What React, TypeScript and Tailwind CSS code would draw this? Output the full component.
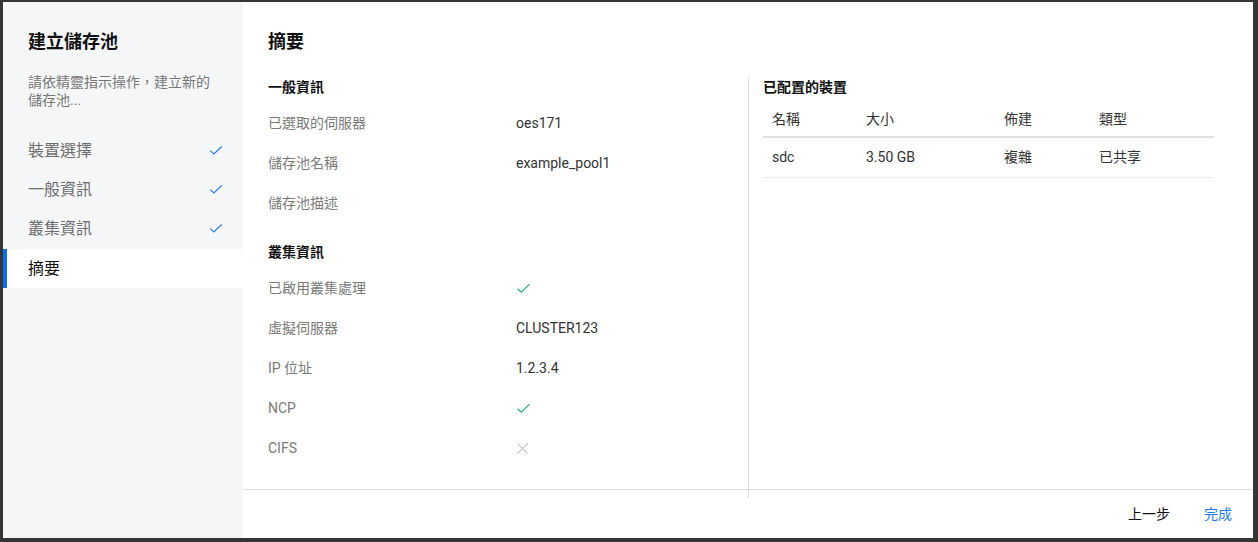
import React from "react";

/* ─────────────────────────────
   DATA
───────────────────────────── */

const steps = [
  { name: "裝置選擇", done: true },
  { name: "一般資訊", done: true },
  { name: "叢集資訊", done: true },
  { name: "摘要", done: false, active: true },
];

type Value = string | "yes" | "no";

const generalInfo: { label: string; value: Value }[] = [
  { label: "已選取的伺服器", value: "oes171" },
  { label: "儲存池名稱", value: "example_pool1" },
  { label: "儲存池描述", value: "" },
];

const clusterInfo: { label: string; value: Value }[] = [
  { label: "已啟用叢集處理", value: "yes" },
  { label: "虛擬伺服器", value: "CLUSTER123" },
  { label: "IP 位址", value: "1.2.3.4" },
  { label: "NCP", value: "yes" },
  { label: "CIFS", value: "no" },
];

const devices = [{ name: "sdc", size: "3.50 GB", provision: "複雜", type: "已共享" }];

/* ─────────────────────────────
   ICONS
───────────────────────────── */

function Check({ className }: { className?: string }) {
  return (
    <svg viewBox="0 0 16 12" className={className} fill="none" stroke="currentColor" strokeWidth="1.4">
      <path d="M1.5 6.2 L5.6 10 L14.5 1.5" />
    </svg>
  );
}

function Cross({ className }: { className?: string }) {
  return (
    <svg viewBox="0 0 14 14" className={className} fill="none" stroke="currentColor" strokeWidth="1.3">
      <path d="M1.5 1.5 L12.5 12.5 M12.5 1.5 L1.5 12.5" />
    </svg>
  );
}

/* ─────────────────────────────
   UI
───────────────────────────── */

function InfoRow({ label, value }: { label: string; value: Value }) {
  return (
    <div className="flex h-[40px] items-center text-[14px]">
      <div className="w-[248px] text-[#7a7a7a]">{label}</div>
      <div className="text-[#333]">
        {value === "yes" ? (
          <Check className="h-[11px] w-[15px] text-[#2fae6e]" />
        ) : value === "no" ? (
          <Cross className="h-[13px] w-[13px] text-[#c4c4c4]" />
        ) : (
          value
        )}
      </div>
    </div>
  );
}

export default function App() {
  return (
    <div
      className="h-[542px] w-full bg-[#353535] pb-[4px] pl-[3px] pr-[5px] pt-[2px]"
      style={{ fontFamily: "Roboto, 'Noto Sans CJK TC', 'Noto Sans', sans-serif" }}
    >
      <div className="flex h-full w-full bg-white">
        {/* SIDEBAR */}
        <aside className="flex w-[240px] shrink-0 flex-col bg-[#f5f6f8] pt-[28px]">
          <h1 className="px-[25px] text-[18px] font-bold leading-[24px] text-[#111]">建立儲存池</h1>
          <p className="mt-[19px] w-[215px] pl-[25px] text-[14px] leading-[18px] text-[#777]">
            請依精靈指示操作，建立新的儲存池...
          </p>
          <nav className="mt-[22px]">
            {steps.map((s) => (
              <div
                key={s.name}
                className={
                  s.active
                    ? "mt-[1px] flex h-[39px] items-center border-l-[4px] border-[#0a6fe8] bg-white pl-[21px] text-[16px] text-[#111]"
                    : "flex h-[39px] items-center pl-[25px] pr-[20px] text-[16px] text-[#6e6e6e]"
                }
              >
                <span className="flex-1">{s.name}</span>
                {s.done && <Check className="h-[11px] w-[14px] text-[#2b7de9]" />}
              </div>
            ))}
          </nav>
        </aside>

        {/* MAIN */}
        <main className="flex flex-1 flex-col pt-[28px]">
          <h2 className="pl-[25px] text-[18px] font-bold leading-[24px] text-[#111]">摘要</h2>

          <div className="relative z-0 -mb-[9px] mt-[23px] flex flex-1 pl-[25px] pr-[39px]">
            {/* left column */}
            <div className="w-[481px] border-r border-[#dcdcdc]">
              <h3 className="text-[14px] font-bold leading-[20px] text-[#111]">一般資訊</h3>
              <div className="mt-[6px]">
                {generalInfo.map((r) => (
                  <InfoRow key={r.label} {...r} />
                ))}
              </div>
              <h3 className="mt-[19px] text-[14px] font-bold leading-[20px] text-[#111]">叢集資訊</h3>
              <div className="mt-[6px]">
                {clusterInfo.map((r) => (
                  <InfoRow key={r.label} {...r} />
                ))}
              </div>
            </div>

            {/* right column */}
            <div className="flex-1 pl-[14px]">
              <h3 className="text-[14px] font-bold leading-[20px] text-[#111]">已配置的裝置</h3>
              <table className="mt-[5px] w-full table-fixed text-left text-[14px] text-[#333]">
                <thead>
                  <tr className="h-[35px] border-b-2 border-[#e0e0e0]">
                    <th className="w-[103px] pl-[9px] font-normal">名稱</th>
                    <th className="w-[138px] font-normal">大小</th>
                    <th className="w-[95px] font-normal">佈建</th>
                    <th className="font-normal">類型</th>
                  </tr>
                </thead>
                <tbody>
                  {devices.map((d) => (
                    <tr key={d.name} className="h-[40px] border-b border-[#ececec]">
                      <td className="pl-[9px]">{d.name}</td>
                      <td>{d.size}</td>
                      <td>{d.provision}</td>
                      <td>{d.type}</td>
                    </tr>
                  ))}
                </tbody>
              </table>
            </div>
          </div>

          {/* FOOTER */}
          <footer className="relative z-10 flex h-[49px] shrink-0 items-center justify-end gap-[34px] border-t border-[#dcdcdc] pr-[21px] text-[14px]">
            <button className="text-[#111]">上一步</button>
            <button className="text-[#1a7ee6]">完成</button>
          </footer>
        </main>
      </div>
    </div>
  );
}
